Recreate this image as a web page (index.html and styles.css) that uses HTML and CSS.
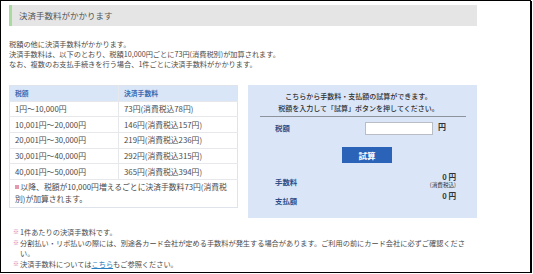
FILE: index.html
```html
<!DOCTYPE html>
<html lang="ja">
<head>
<meta charset="utf-8">
<title>決済手数料</title>
<link rel="stylesheet" href="styles.css">
</head>
<body>
<div class="frame">
  <h2 class="title">決済手数料がかかります</h2>
  <div class="intro">
    <p>税額の他に決済手数料がかかります。</p>
    <p>決済手数料は、以下のとおり、税額10,000円ごとに73円(消費税別)が加算されます。</p>
    <p>なお、複数のお支払手続きを行う場合、1件ごとに決済手数料がかかります。</p>
  </div>
  <div class="cols">
    <table class="fee">
      <thead>
        <tr><th class="c1">税額</th><th>決済手数料</th></tr>
      </thead>
      <tbody>
        <tr><td class="c1">1円～10,000円</td><td>73円(消費税込78円)</td></tr>
        <tr><td class="c1">10,001円～20,000円</td><td>146円(消費税込157円)</td></tr>
        <tr><td class="c1">20,001円～30,000円</td><td>219円(消費税込236円)</td></tr>
        <tr><td class="c1">30,001円～40,000円</td><td>292円(消費税込315円)</td></tr>
        <tr><td class="c1">40,001円～50,000円</td><td>365円(消費税込394円)</td></tr>
        <tr><td class="foot" colspan="2"><span class="sq"></span>以降、税額が10,000円増えるごとに決済手数料73円(消費税別)が加算されます。</td></tr>
      </tbody>
    </table>
    <div class="calc">
      <p class="lead">こちらから手数料・支払額の試算ができます。<br>税額を入力して「試算」ボタンを押してください。</p>
      <div class="rule"></div>
      <div class="row-input">
        <span class="lbl">税額</span>
        <span class="field"><input type="text" class="inp"><span class="yen">円</span></span>
      </div>
      <div class="btn-wrap"><button class="btn" type="button">試算</button></div>
      <div class="results">
        <div class="res">
          <span class="lbl">手数料</span>
          <span class="val">0 円<small>(消費税込)</small></span>
        </div>
        <div class="res">
          <span class="lbl">支払額</span>
          <span class="val">0 円</span>
        </div>
      </div>
    </div>
  </div>
  <ul class="notes">
    <li>1件あたりの決済手数料です。</li>
    <li>分割払い・リボ払いの際には、別途各カード会社が定める手数料が発生する場合があります。ご利用の前にカード会社に必ずご確認ください。</li>
    <li>決済手数料については<a href="#">こちら</a>もご参照ください。</li>
  </ul>
</div>
</body>
</html>
```
FILE: styles.css
```css
* { box-sizing: border-box; }
html, body { margin: 0; padding: 0; background: #fff; }
body {
  font-family: "Noto Sans CJK JP", "Noto Sans", sans-serif;
  color: #4a4a4a;
  font-size: 7.2px;
  line-height: 10.2px;
}
.frame {
  width: 531px;
  height: 273px;
  border: 1px solid #000;
  box-shadow: 1px 1px 0 #000;
  padding: 4px 53px 0 8px;
  overflow: hidden;
}
.title {
  margin: 0;
  height: 21px;
  background: #e5e5e5;
  border-left: 3px solid #a9dba0;
  padding-left: 7px;
  font-size: 8.5px;
  line-height: 21px;
  font-weight: normal;
  color: #555;
}
.intro { margin-top: 13px; }
.intro p { margin: 0; }
.cols {
  display: flex;
  align-items: flex-start;
  gap: 10px;
  margin-top: 15px;
}
.fee {
  width: 229px;
  border-collapse: collapse;
  border: 1px solid #dfe4ec;
  font-size: 7.8px;
}
.fee th, .fee td {
  text-align: left;
  padding: 0 5px;
  height: 15.7px;
  line-height: 10px;
  border-bottom: 1px solid #e6e8ec;
}
.fee .c1 { width: 109px; border-right: 1px solid #e6e8ec; }
.fee th {
  background: #d9e6f8;
  color: #3d6db3;
  font-weight: bold;
  height: 16px;
  font-size: 6.8px;
}
.fee td.foot {
  height: auto;
  padding: 1px 6px 3px 5px;
  line-height: 11.5px;
  border-bottom: 0;
}
.sq {
  display: inline-block;
  width: 4px;
  height: 4px;
  background: #e49aae;
  margin: 0 1.5px 1px 0;
  vertical-align: middle;
}
.calc {
  width: 229px;
  height: 133px;
  background: #dae6f8;
  padding-top: 5px;
  color: #2e2e2e;
}
.lead {
  margin: 0;
  text-align: center;
  font-size: 7px;
  line-height: 12.3px;
  padding-right: 8px;
  font-weight: 500;
}
.rule {
  height: 1px;
  background: #8d939c;
  margin: 2px 11px 0 12px;
}
.lbl {
  color: #2d4f88;
  font-weight: bold;
  font-size: 7.4px;
  line-height: 10px;
}
.row-input {
  display: flex;
  align-items: center;
  justify-content: space-between;
  padding: 5px 31px 0 27px;
}
.field { display: flex; align-items: center; gap: 5px; }
.inp {
  width: 68px;
  height: 12.5px;
  border: 1px solid #b9bec6;
  background: #fff;
  padding: 0;
  margin: 0;
}
.yen { font-weight: bold; font-size: 8px; color: #333; margin-top: -3px; }
.btn-wrap { display: flex; justify-content: center; padding-top: 12px; padding-left: 9px; }
.btn {
  width: 50px;
  height: 16px;
  background: #2b63b8;
  border: 0;
  color: #fff;
  font-family: "Noto Sans CJK JP", sans-serif;
  font-weight: bold;
  font-size: 8.5px;
  padding: 0;
  line-height: 16px;
}
.results { padding: 9px 21px 0 27px; }
.res {
  display: flex;
  justify-content: space-between;
  align-items: flex-start;
}
.res + .res { margin-top: 2px; }
.res .lbl { margin-top: 5px; }
.val {
  display: flex;
  flex-direction: column;
  align-items: flex-end;
  font-weight: bold;
  font-size: 7.6px;
  line-height: 9px;
  color: #333;
}
.val small {
  font-size: 5.6px;
  line-height: 8px;
  font-weight: normal;
}
.notes {
  list-style: none;
  margin: 9px 0 0;
  padding: 0 0 0 11px;
  font-size: 7.2px;
  line-height: 10.2px;
}
.notes li { position: relative; margin-bottom: 1px; }
.notes li::before {
  content: "※";
  position: absolute;
  left: -7px;
  color: #e0707e;
  font-size: 6px;
}
.notes a { color: #2a7fc0; text-decoration: underline; }
```
